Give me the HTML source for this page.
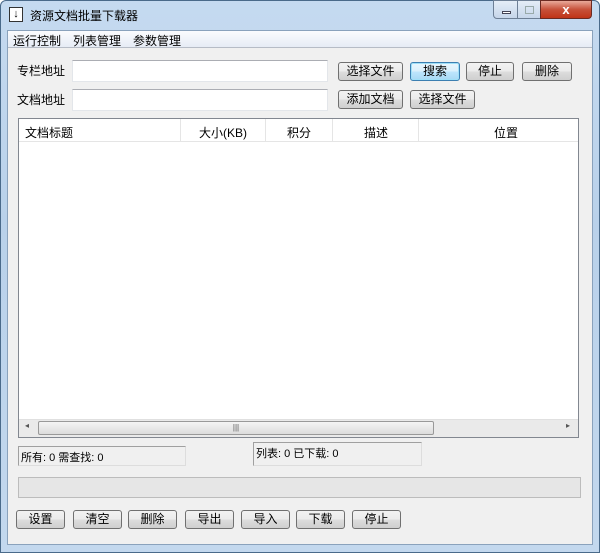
<!DOCTYPE html>
<html><head><meta charset="utf-8"><style>
*{margin:0;padding:0;box-sizing:border-box}
body{width:600px;height:553px;overflow:hidden;background:#fff;font-family:"Liberation Sans","Noto Sans CJK SC",sans-serif;font-size:12px;color:#000;position:relative}
.a{position:absolute}
.frame{left:0;top:0;width:600px;height:553px;background:linear-gradient(#c5daf0,#b9d1ea 40%,#c3d8ee);border:1px solid #4a6a8a;border-radius:6px 6px 0 0}
.client{left:7px;top:30px;width:586px;height:515px;background:#f0f0f0;border:1px solid #8aa2bc}
.menu{left:8px;top:31px;width:584px;height:17px;background:linear-gradient(#fbfcfe,#e6ecf5);border-bottom:1px solid #b6bcc6}
.btn{height:19px;border:1px solid #707070;border-radius:3px;background:linear-gradient(#f2f2f2 0%,#ebebeb 50%,#dddddd 51%,#cfcfcf 100%);text-align:center;line-height:17px;font-size:12px}
.inp{background:#fff;border:1px solid #e3e6ea;border-top-color:#abadb3}
.hd{top:124px;font-size:12px}
.sep{top:119px;width:1px;height:23px;background:#e5e5e5}
</style></head><body>
<div class="a frame"></div>
<div class="a" style="left:9px;top:7px;width:14px;height:15px;background:#fff;border:1px solid #333;font-size:11px;line-height:12px;text-align:center;font-weight:bold">↓</div>
<div class="a" style="left:30px;top:7px;font-size:12px">资源文档批量下载器</div>
<div class="a" style="left:493px;top:0;width:25px;height:19px;border:1px solid #6d7f95;border-radius:0 0 0 4px;background:linear-gradient(#e4edf7,#c6d6ea)"><div class="a" style="left:8px;top:10px;width:9px;height:3px;background:#fff;border:1px solid #445"></div></div>
<div class="a" style="left:517px;top:0;width:24px;height:19px;border:1px solid #6d7f95;background:linear-gradient(#e4edf7,#c6d6ea)"><div class="a" style="left:7px;top:5px;width:9px;height:8px;border:1px solid #9aa"></div></div>
<div class="a" style="left:540px;top:0;width:52px;height:19px;border:1px solid #6b2a22;border-radius:0 0 4px 0;background:linear-gradient(#e9a99a,#c7513a 50%,#c03418);color:#fff;font-weight:bold;text-align:center;font-size:13px;line-height:17px">x</div>
<div class="a client"></div>
<div class="a menu"></div>
<div class="a" style="left:13px;top:32px">运行控制</div>
<div class="a" style="left:73px;top:32px">列表管理</div>
<div class="a" style="left:133px;top:32px">参数管理</div>

<div class="a" style="left:17px;top:62px">专栏地址</div>
<div class="a inp" style="left:72px;top:60px;width:256px;height:22px"></div>
<div class="a" style="left:17px;top:91px">文档地址</div>
<div class="a inp" style="left:72px;top:89px;width:256px;height:22px"></div>
<div class="a btn" style="left:338px;top:62px;width:65px">选择文件</div>
<div class="a btn" style="left:410px;top:62px;width:50px;border-color:#3c7fb1;box-shadow:inset 0 0 0 1px #9fe0f8;background:linear-gradient(#eaf6fd,#d9f0fc 50%,#bee6fd 51%,#a7d9f5)">搜索</div>
<div class="a btn" style="left:466px;top:62px;width:48px">停止</div>
<div class="a btn" style="left:522px;top:62px;width:50px">删除</div>
<div class="a btn" style="left:338px;top:90px;width:65px">添加文档</div>
<div class="a btn" style="left:410px;top:90px;width:65px">选择文件</div>

<div class="a" style="left:18px;top:118px;width:561px;height:320px;background:#fff;border:1px solid #828790"></div>
<div class="a" style="left:19px;top:119px;width:559px;height:23px;background:#fff;border-bottom:1px solid #e5e5e5"></div>
<div class="a sep" style="left:180px"></div><div class="a sep" style="left:265px"></div><div class="a sep" style="left:332px"></div><div class="a sep" style="left:418px"></div>
<div class="a hd" style="left:25px">文档标题</div>
<div class="a hd" style="left:199px">大小(KB)</div>
<div class="a hd" style="left:287px">积分</div>
<div class="a hd" style="left:364px">描述</div>
<div class="a hd" style="left:494px">位置</div>
<div class="a" style="left:19px;top:419px;width:559px;height:18px;background:#eaeaea;border-top:1px solid #e0e0e0"></div>
<div class="a" style="left:25px;top:421px;font-size:8px;color:#555">◂</div>
<div class="a" style="left:566px;top:421px;font-size:8px;color:#555">▸</div>
<div class="a" style="left:38px;top:421px;width:396px;height:14px;border:1px solid #999;border-radius:2px;background:linear-gradient(#f4f4f4,#dcdcdc);text-align:center;font-size:8px;line-height:11px;color:#555">|||</div>

<div class="a" style="left:18px;top:446px;width:168px;height:20px;border:1px solid #ddd;border-top-color:#a0a0a0;border-left-color:#a0a0a0"></div>
<div class="a" style="left:21px;top:449px;font-size:11px">所有: 0 需查找: 0</div>
<div class="a" style="left:253px;top:442px;width:169px;height:24px;border:1px solid #ddd;border-top-color:#a0a0a0;border-left-color:#a0a0a0"></div>
<div class="a" style="left:256px;top:445px;font-size:11px">列表: 0 已下载: 0</div>
<div class="a" style="left:18px;top:477px;width:563px;height:21px;border:1px solid #bcbcbc;background:#e6e6e6"></div>

<div class="a btn" style="left:16px;top:510px;width:49px">设置</div>
<div class="a btn" style="left:73px;top:510px;width:49px">清空</div>
<div class="a btn" style="left:128px;top:510px;width:49px">删除</div>
<div class="a btn" style="left:185px;top:510px;width:49px">导出</div>
<div class="a btn" style="left:241px;top:510px;width:49px">导入</div>
<div class="a btn" style="left:296px;top:510px;width:49px">下载</div>
<div class="a btn" style="left:352px;top:510px;width:49px">停止</div>
</body></html>
